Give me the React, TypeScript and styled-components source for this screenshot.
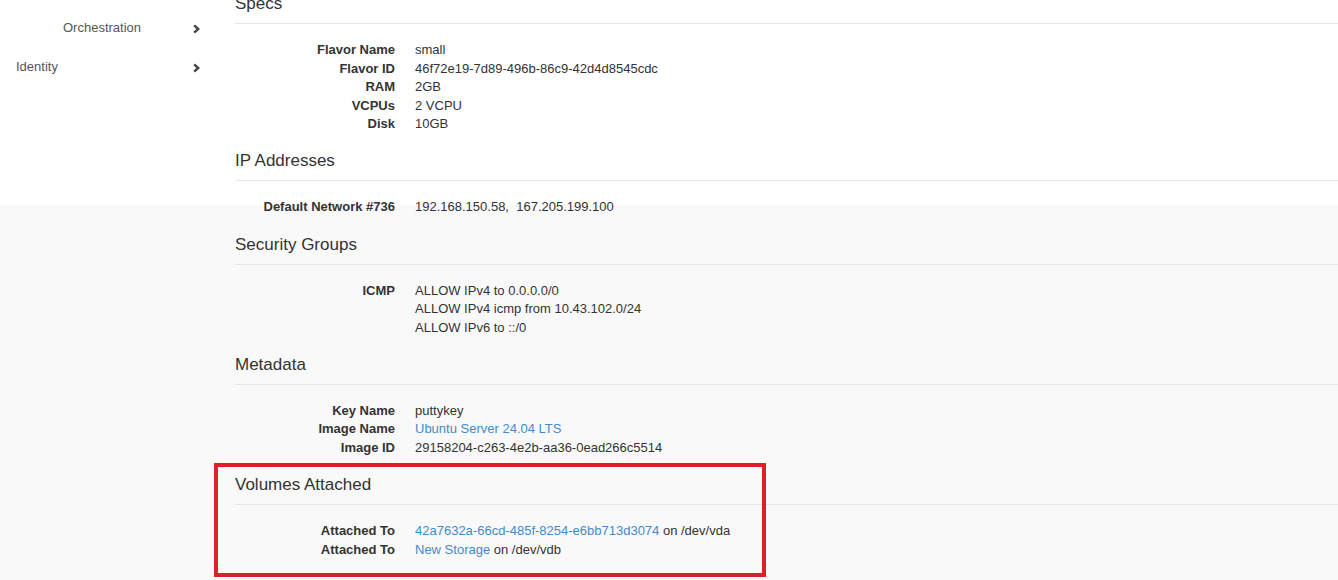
import React from "react";
import styled, { createGlobalStyle } from "styled-components";

const GlobalStyle = createGlobalStyle`
  html, body { margin: 0; padding: 0; }
  body {
    font-family: "Liberation Sans", Arial, Helvetica, sans-serif;
    font-size: 13px;
    line-height: 1.428571;
    color: #333;
    background: linear-gradient(to bottom, #ffffff 0, #ffffff 205px, #f9f9f9 205px, #f9f9f9 100%);
    min-height: 580px;
    overflow: hidden;
  }
`;

const Page = styled.div`
  display: flex;
  width: 1338px;
  height: 580px;
  overflow: hidden;
`;

const Sidebar = styled.nav`
  width: 220px;
  flex: none;
  padding-top: 9px;
  display: flex;
  flex-direction: column;
`;

const NavItem = styled.div<{ $indent: number }>`
  height: 39px;
  display: flex;
  align-items: center;
  justify-content: space-between;
  padding: 0 20px 0 ${(p) => p.$indent}px;
  color: #555;
  font-size: 13px;
`;

const Main = styled.main`
  flex: 1;
  padding-left: 15px;
  margin-top: -6px;
  display: flex;
  flex-direction: column;
`;

const Section = styled.section`
  position: relative;
`;

const Heading = styled.h4`
  margin: 0;
  font-size: 17px;
  font-weight: 400;
  line-height: 19px;
  color: #333;
  padding-bottom: 10px;
  border-bottom: 1px solid #e6e6e6;
`;

const DL = styled.dl`
  margin: 17px 0 17.6px;
  display: grid;
  grid-template-columns: 160px 1fr;
  column-gap: 20px;
`;

const DT = styled.dt`
  font-weight: 700;
  text-align: right;
  white-space: nowrap;
`;

const DD = styled.dd`
  margin: 0;
  white-space: nowrap;
`;

const Link = styled.a`
  color: #428bca;
  text-decoration: none;
`;

const Highlight = styled.div`
  position: absolute;
  top: -12px;
  left: -21px;
  width: 552px;
  bottom: 0;
  border: 4px solid #dc2029;
  box-sizing: border-box;
  pointer-events: none;
`;

const Chevron = () => (
  <svg width="7" height="10" viewBox="0 0 7 10" aria-hidden="true">
    <polyline
      points="1.2,1.4 5.2,5 1.2,8.6"
      fill="none"
      stroke="#444"
      strokeWidth="2.4"
      strokeLinecap="butt"
      strokeLinejoin="miter"
    />
  </svg>
);

type Row = { label: string; value: React.ReactNode[] };

const sections: { title: string; rows: Row[]; highlight?: boolean }[] = [
  {
    title: "Specs",
    rows: [
      { label: "Flavor Name", value: ["small"] },
      { label: "Flavor ID", value: ["46f72e19-7d89-496b-86c9-42d4d8545cdc"] },
      { label: "RAM", value: ["2GB"] },
      { label: "VCPUs", value: ["2 VCPU"] },
      { label: "Disk", value: ["10GB"] },
    ],
  },
  {
    title: "IP Addresses",
    rows: [
      {
        label: "Default Network #736",
        value: ["192.168.150.58,\u00a0 167.205.199.100"],
      },
    ],
  },
  {
    title: "Security Groups",
    rows: [
      {
        label: "ICMP",
        value: [
          "ALLOW IPv4 to 0.0.0.0/0",
          "ALLOW IPv4 icmp from 10.43.102.0/24",
          "ALLOW IPv6 to ::/0",
        ],
      },
    ],
  },
  {
    title: "Metadata",
    rows: [
      { label: "Key Name", value: ["puttykey"] },
      {
        label: "Image Name",
        value: [<Link href="#">Ubuntu Server 24.04 LTS</Link>],
      },
      { label: "Image ID", value: ["29158204-c263-4e2b-aa36-0ead266c5514"] },
    ],
  },
  {
    title: "Volumes Attached",
    highlight: true,
    rows: [
      {
        label: "Attached To",
        value: [
          <>
            <Link href="#">42a7632a-66cd-485f-8254-e6bb713d3074</Link> on /dev/vda
          </>,
        ],
      },
      {
        label: "Attached To",
        value: [
          <>
            <Link href="#">New Storage</Link> on /dev/vdb
          </>,
        ],
      },
    ],
  },
];

export default function App() {
  return (
    <>
      <GlobalStyle />
      <Page>
        <Sidebar>
          <NavItem $indent={63}>
            <span>Orchestration</span>
            <Chevron />
          </NavItem>
          <NavItem $indent={16}>
            <span>Identity</span>
            <Chevron />
          </NavItem>
        </Sidebar>
        <Main>
          {sections.map((s) => (
            <Section key={s.title}>
              <Heading>{s.title}</Heading>
              <DL>
                {s.rows.map((r, i) => (
                  <React.Fragment key={i}>
                    <DT>{r.label}</DT>
                    <DD>
                      {r.value.map((v, j) => (
                        <div key={j}>{v}</div>
                      ))}
                    </DD>
                  </React.Fragment>
                ))}
              </DL>
              {s.highlight && <Highlight />}
            </Section>
          ))}
        </Main>
      </Page>
    </>
  );
}
